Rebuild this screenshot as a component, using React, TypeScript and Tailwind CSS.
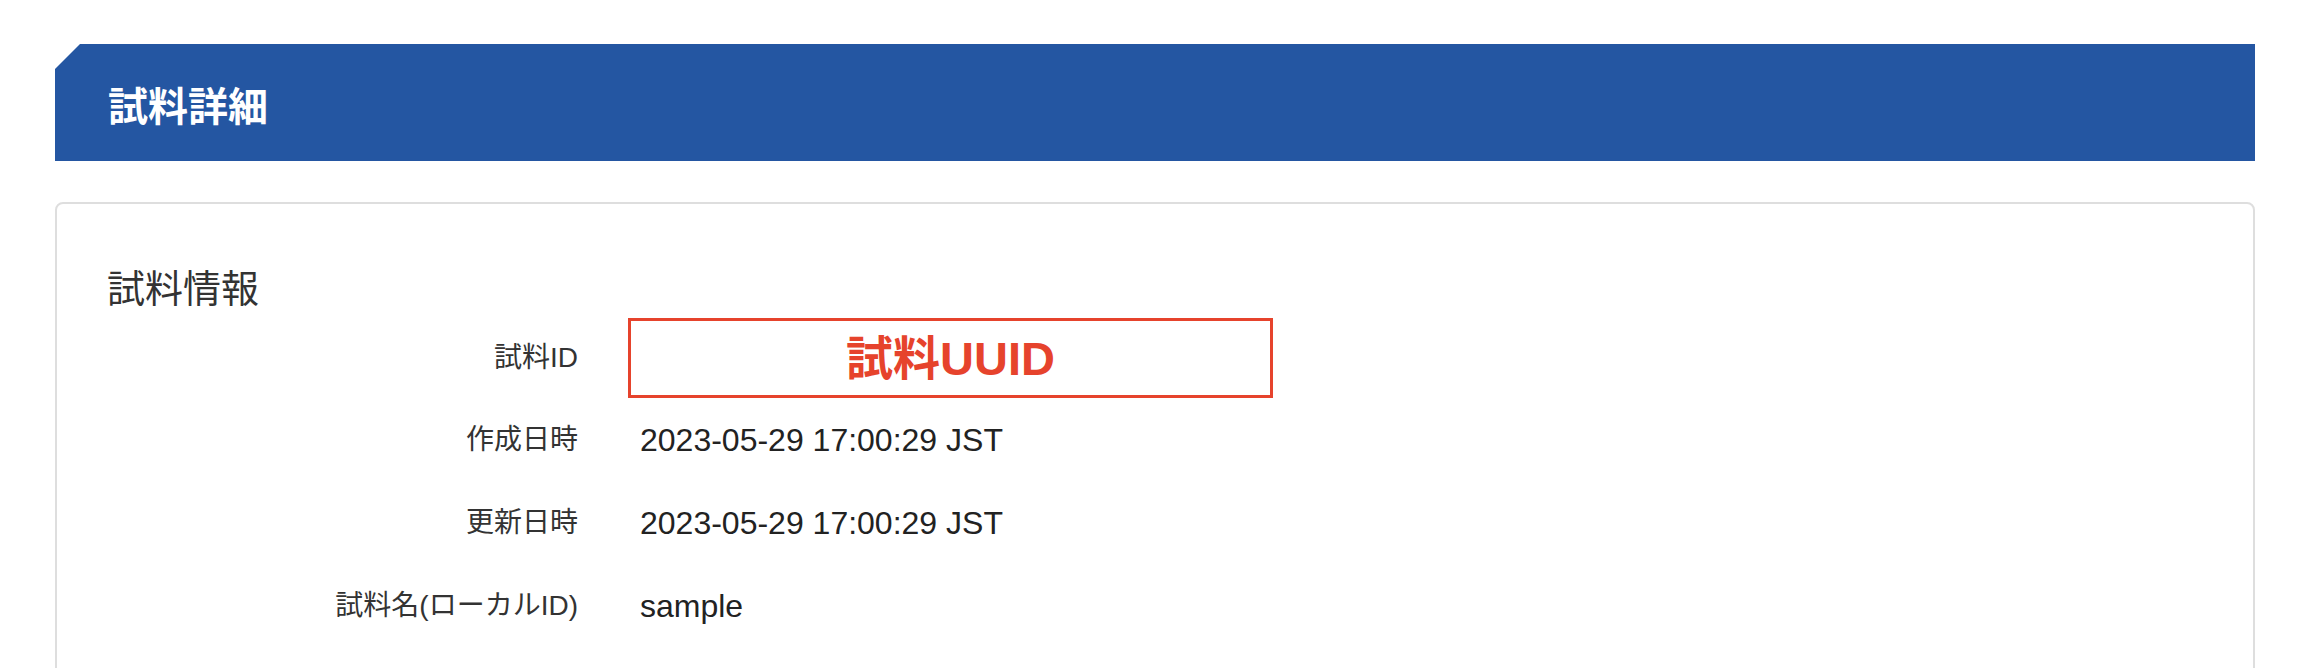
export default function App() {
  const rows = [
    { label: "作成日時", value: "2023-05-29 17:00:29 JST" },
    { label: "更新日時", value: "2023-05-29 17:00:29 JST" },
    { label: "試料名(ローカルID)", value: "sample" },
  ];

  return (
    <div className="min-h-screen bg-white px-[55px] pt-[44px] font-['Liberation_Sans','Noto_Sans_CJK_JP',sans-serif] text-[#222]">
      {/* Page title */}
      <div className="flex h-[117px] items-center bg-[#2456a2] pl-[53px] pt-[8px] [clip-path:polygon(25px_0,100%_0,100%_100%,0_100%,0_25px)]">
        <h1 className="text-[40px] font-bold leading-none text-white">試料詳細</h1>
      </div>

      {/* Detail card */}
      <div className="mt-[41px] rounded-[8px] border-2 border-[#dedede] pb-[80px] pl-[50px] pt-[57px]">
        <h2 className="text-[38px] leading-[56px] text-[#333]">試料情報</h2>

        <div className="mt-[1px] flex flex-col">
          <div className="flex h-[80px] items-center">
            <div className="w-[471px] text-right text-[28px] text-[#333]">試料ID</div>
            <div className="ml-[50px] flex h-[80px] w-[645px] items-center justify-center border-[3px] border-[#e6432c]">
              <span className="text-[47px] font-bold leading-none text-[#e6432c]">試料UUID</span>
            </div>
          </div>

          {rows.map((row) => (
            <div key={row.label} className="flex h-[83px] items-center">
              <div className="w-[471px] text-right text-[28px] text-[#333]">{row.label}</div>
              <div className="ml-[62px] text-[32px] text-[#222]">{row.value}</div>
            </div>
          ))}
        </div>
      </div>
    </div>
  );
}
